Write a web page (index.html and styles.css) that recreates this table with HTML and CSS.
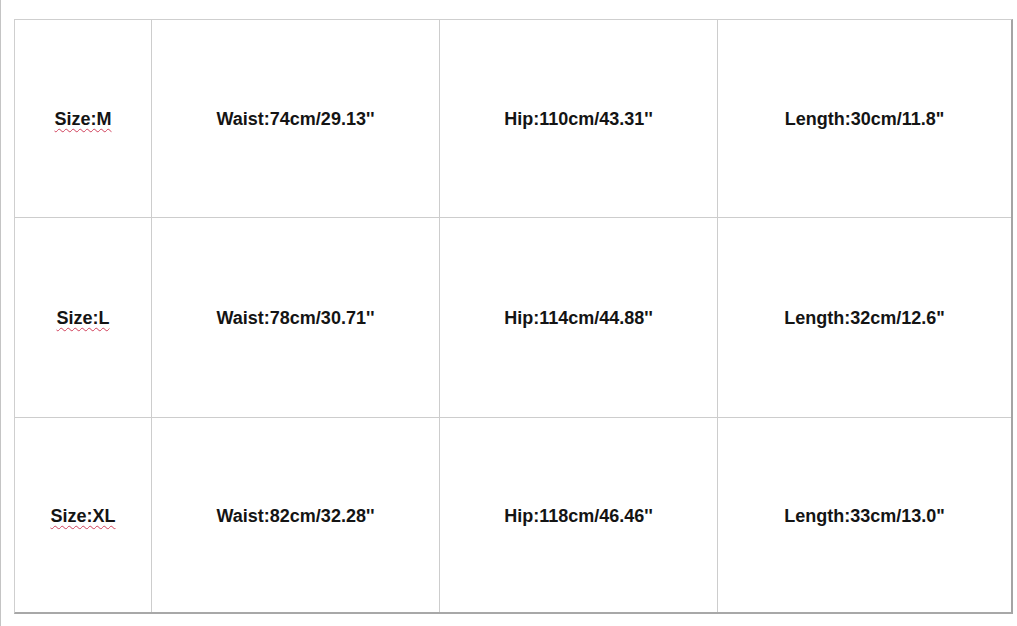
FILE: index.html
```html
<!DOCTYPE html>
<html>
<head>
<meta charset="utf-8">
<link rel="stylesheet" href="styles.css">
</head>
<body>
<div class="page">
  <div class="chart">
    <div class="cell c1 r1"><span class="size">Size:M</span></div>
    <div class="cell c2 r1">Waist:74cm/29.13''</div>
    <div class="cell c3 r1">Hip:110cm/43.31''</div>
    <div class="cell c4 r1">Length:30cm/11.8"</div>

    <div class="cell c1 r2"><span class="size">Size:L</span></div>
    <div class="cell c2 r2">Waist:78cm/30.71''</div>
    <div class="cell c3 r2">Hip:114cm/44.88''</div>
    <div class="cell c4 r2">Length:32cm/12.6"</div>

    <div class="cell c1 r3"><span class="size">Size:XL</span></div>
    <div class="cell c2 r3">Waist:82cm/32.28''</div>
    <div class="cell c3 r3">Hip:118cm/46.46''</div>
    <div class="cell c4 r3">Length:33cm/13.0"</div>
  </div>
</div>
</body>
</html>
```
FILE: styles.css
```css
html, body {
  margin: 0;
  padding: 0;
  background: #ffffff;
}
.page {
  width: 1016px;
  height: 626px;
  border-left: 1px solid #c4c4c4;
  padding: 19px 0 0 13px;
  box-sizing: border-box;
}
.chart {
  display: grid;
  grid-template-columns: 137px 288px 278px 293px;
  grid-template-rows: 198px 200px 194px;
  width: max-content;
  border-top: 1px solid #cfcfcf;
  border-left: 1px solid #cfcfcf;
  border-right: 2px solid #a4a4a4;
  border-bottom: 2px solid #a8a8a8;
  font-family: "Liberation Sans", Arial, sans-serif;
  font-weight: bold;
  font-size: 18px;
  color: #141414;
}
.cell {
  display: flex;
  align-items: center;
  justify-content: center;
  box-sizing: border-box;
  border-right: 1px solid #cdcdcd;
  border-bottom: 1px solid #cdcdcd;
  padding-top: 2px;
}
.c4 { border-right: none; }
.r3 { border-bottom: none; }
.size {
  text-decoration: underline wavy #d0405a;
  text-decoration-thickness: 1px;
  text-underline-offset: 3px;
}
```
